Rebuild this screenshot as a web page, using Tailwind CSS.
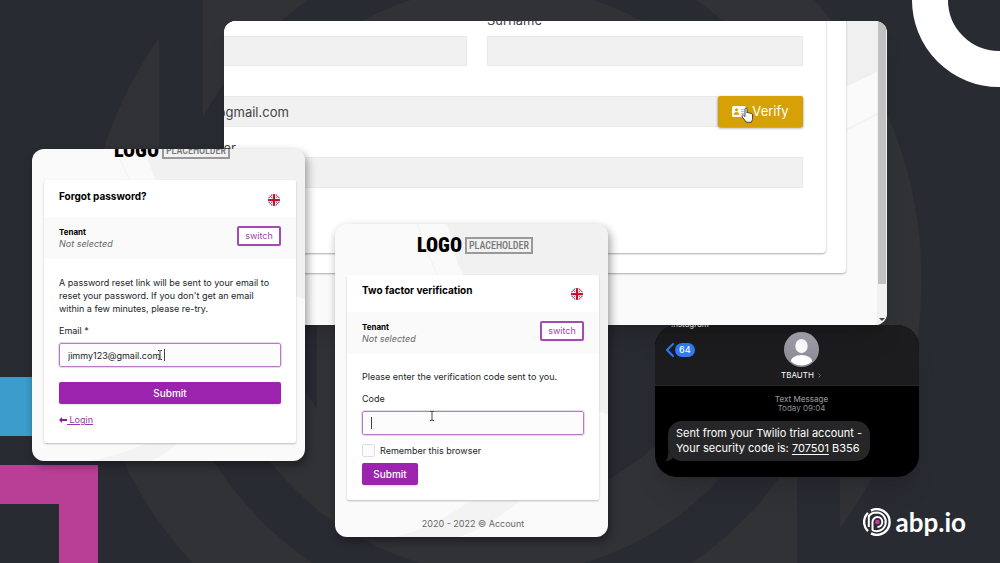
<!doctype html>
<html lang="en">
  <head>
    <meta charset="utf-8">
    <meta name="viewport" content="width=device-width, initial-scale=1.0">
    <title>Two factor verification - abp.io</title>
    <script src="https://cdn.jsdelivr.net/npm/@tailwindcss/browser@4"></script>
  </head>

  <body class="relative min-h-screen overflow-hidden bg-[#292b33] font-['Inter','Open_Sans',sans-serif] text-[#212529]">
    <!-- backdrop -->
    <svg class="absolute inset-0 h-full w-full" viewBox="0 0 1000 563" preserveAspectRatio="xMidYMid slice" aria-hidden="true">
      <g fill="none" stroke="#303236">
        <circle cx="502" cy="280" r="380" stroke-width="79" />
        <circle cx="502" cy="280" r="260" stroke-width="69" />
      </g>
      <path d="M159 0h44v424h-44zM797 250h43v313h-43z" fill="#292b33" />
      <path d="M317 300h30v232l-30-22z" fill="#303236" />
      <circle cx="999" cy="0" r="69" fill="none" stroke="#fff" stroke-width="36" />
      <path d="M0 377h60v59H0z" fill="#3c9dcc" />
      <path d="M0 465h98v98H59v-59H0z" fill="#b93f96" />
    </svg>

    <svg class="hidden" aria-hidden="true">
      <symbol id="flag" viewBox="0 0 24 24">
        <path d="M0 0h24v24H0z" fill="#2b3a78" />
        <path d="M0 0l24 24M24 0L0 24" stroke="#fff" stroke-width="5" />
        <path d="M0 0l24 24M24 0L0 24" stroke="#c8102e" stroke-width="1.5" />
        <path d="M12 0v24M0 12h24" stroke="#fff" stroke-width="8" />
        <path d="M12 0v24M0 12h24" stroke="#c8102e" stroke-width="4.5" />
      </symbol>
      <symbol id="ibeam" viewBox="0 0 6 10">
        <path d="M1 .5h1.500L3 1l.5-.5H5M3 1v8M1 9.500h1.500L3 9l.5.5H5" fill="none" stroke="#444" stroke-width="1" />
      </symbol>
    </svg>

    <!-- message window -->
    <section class="absolute left-[655px] top-[325px] w-[264px] overflow-hidden rounded-[22px] bg-black text-white shadow-xl">
      <header class="relative h-[61px] border-b border-[#2a2a2c] bg-[#1c1c1e]">
        <p class="absolute -top-[7px] left-4 text-[8px] leading-3">Instagram</p>
        <a href="#" class="absolute left-[11px] top-[18px] flex items-center gap-px">
          <svg class="h-[14px] w-2" viewBox="0 0 8 14" fill="none" stroke="#2f7cf6" stroke-width="2" stroke-linecap="round" stroke-linejoin="round"><path d="M7 1L1 7l6 6" /></svg>
          <span class="rounded-full bg-[#2f7cf6] px-1 text-[9px] font-medium leading-[14px]">64</span>
        </a>
        <div class="ml-7 flex flex-col items-center pt-[7px]">
          <svg class="h-[35px] w-[35px]" viewBox="0 0 35 35" aria-hidden="true">
            <defs>
              <linearGradient id="grey" x2="0" y2="1"><stop stop-color="#a9a8b4" /><stop offset="1" stop-color="#85848f" /></linearGradient>
              <clipPath id="face"><circle cx="17.500" cy="17.500" r="16" /></clipPath>
            </defs>
            <circle cx="17.500" cy="17.500" r="17.500" fill="url(#grey)" />
            <g clip-path="url(#face)" fill="#fff">
              <ellipse cx="17.500" cy="14" rx="6.200" ry="7" />
              <ellipse cx="17.500" cy="30" rx="11" ry="7" />
            </g>
          </svg>
          <p class="flex items-center gap-1 text-[8px] leading-4">TBAUTH
            <svg class="h-[5px] w-[3px]" viewBox="0 0 3 5" fill="none" stroke="#666"><path d="M.5.5l2 2-2 2" /></svg>
          </p>
        </div>
      </header>
      <div class="pb-4 pl-[13px] pt-[9px]">
        <p class="ml-4 text-center text-[8px] leading-[9px] text-[#8e8e93]"><span class="font-medium">Text Message</span><br>Today 09:04</p>
        <div class="relative mt-2 w-fit rounded-[14px] bg-[#262628] px-2 py-[5px] text-[11px] leading-[15px]">
          <svg class="absolute -left-[3px] bottom-0 h-[10px] w-3" viewBox="0 0 12 10" fill="#262628"><path d="M3 0c0 5 0 8-3 10 4 0 6-1 8-3z" /></svg>
          <p class="relative">Sent from your Twilio trial account -<br>Your security code is: <a href="#" class="underline underline-offset-2">707501</a> B356</p>
        </div>
      </div>
    </section>

    <!-- profile window -->
    <section class="absolute left-[224px] top-[21px] flex h-[304px] w-[663px] overflow-hidden rounded-xl bg-[#fafafa] shadow-xl">
      <div class="relative min-w-0 flex-1 pr-[31px]">
        <svg class="absolute right-0 top-0 h-[125px] w-[31px]" viewBox="0 0 31 125" aria-hidden="true">
          <path d="M0 0h31v51L0 66z" fill="#f0f0f0" />
          <path d="M0 109l31-16" stroke="#f3f3f3" stroke-width="2" />
        </svg>
        <div class="relative rounded-br-sm bg-white pb-5 pr-5 shadow-[0_1px_2px_#aaa]">
          <form class="rounded-br-sm bg-white pb-[65px] pr-[23px] text-[13px] text-[#444] shadow-[0_1px_2px_#aaa]">
            <div class="-mt-[9px] grid grid-cols-[243fr_316fr] gap-x-5">
              <div class="flex items-end"><input aria-label="Name" readonly class="h-[30px] w-full border border-l-0 border-[#e9e9e9] bg-[#f1f1f1]"></div>
              <div class="flex flex-col gap-2">
                <label for="surname" class="leading-4">Surname</label>
                <input id="surname" readonly class="h-[30px] w-full border border-[#e9e9e9] bg-[#f1f1f1] px-2">
              </div>
            </div>
            <div class="mt-[30px] flex">
              <input aria-label="Email" readonly value="@gmail.com" class="-ml-3 h-[31px] min-w-0 flex-1 border border-[#e9e9e9] bg-[#f1f1f1]">
              <button type="button" class="relative flex h-[31px] w-[85px] items-center justify-center gap-[6px] rounded-xs bg-[#d6a106] text-white shadow-sm shadow-black/40">
                <svg class="h-[11px] w-[14px]" viewBox="0 0 14 11" aria-hidden="true">
                  <rect width="14" height="11" rx="1.500" fill="#fff" />
                  <circle cx="4.500" cy="3.800" r="1.500" fill="#d6a106" />
                  <path d="M2 8.500c0-3 5-3 5 0zM9 3.500h3.500M9 5.500h3.500M9 7.500h3.500" fill="#d6a106" stroke="#d6a106" stroke-width=".7" />
                </svg>
                Verify
                <svg class="absolute left-[23px] top-[11px] h-4 w-3" viewBox="0 0 12 16" aria-hidden="true">
                  <path d="M4 9.500V2.200C4 .4 6 .4 6 2.200V6c.2-1 1.800-1 2 .3.500-.8 1.700-.5 1.800.6.600-.6 1.700-.2 1.700.8v3.500c0 2-.8 2.500-1 4H5c-.5-1.500-2-3-3-4.200C0 8.500 1.500 7 2.500 8.200z" fill="#fff" stroke="#222" stroke-width=".8" />
                </svg>
              </button>
            </div>
            <label for="phone" class="mb-px mt-[13px] flex w-3 justify-end whitespace-nowrap leading-4">Phone number</label>
            <input id="phone" readonly class="block h-[31px] w-full border border-l-0 border-[#e9e9e9] bg-[#f1f1f1]">
          </form>
        </div>
      </div>
      <!-- scrollbar -->
      <div class="flex w-[10px] flex-col bg-[#f1f1f1]">
        <div class="mx-px h-[263px] bg-[#c1c1c1]"></div>
        <svg class="mt-auto mb-1 ml-[2px] h-[3px] w-[6px]" viewBox="0 0 6 3"><path d="M0 0h6L3 3z" fill="#444" /></svg>
      </div>
    </section>

    <!-- forgot password window -->
    <section class="absolute left-8 top-[149px] w-[273px] overflow-hidden rounded-xl bg-[#fafafa] pb-[18px] pl-3 pr-[9px] text-[9px] shadow-[2px_4px_10px_#00000066]">
      <svg class="absolute left-0 top-0 h-full w-full" viewBox="0 0 273 312" preserveAspectRatio="none" aria-hidden="true">
        <path d="M112 0h161v150q-80-20-150-120z" fill="#f1f1f1" />
        <path d="M88 10l10 22" stroke="#f1f1f1" />
        <path d="M60 312q40-10 60-20h30q-20 15-30 20z" fill="#f3f3f3" />
      </svg>
      <div class="relative -mt-5 mb-[9px] flex h-[42px] items-center justify-center gap-[3px] pl-1">
        <strong class="font-['Liberation_Sans_Narrow','Roboto_Condensed','Roboto',sans-serif] text-[20px] font-black leading-5 text-black">LOGO</strong>
        <span class="border-2 border-[#999] px-[2px] font-['Liberation_Sans_Narrow','Roboto_Condensed','Roboto',sans-serif] text-[10px] font-medium leading-[13px] text-[#777]">PLACEHOLDER</span>
      </div>
      <div class="relative rounded-xs bg-white shadow-[0_1px_2px_#bbb]">
        <div class="flex h-[37px] items-start justify-between px-4 pl-[15px] pt-2">
          <h1 class="text-[10px] font-bold leading-4 text-black">Forgot password?</h1>
          <span class="flex h-6 items-center"><svg class="h-3 w-3 rounded-full"><use href="#flag" /></svg></span>
        </div>
        <div class="flex items-start justify-between bg-[#fafafa] px-[15px] py-[9px]">
          <p class="text-[8px] leading-3"><strong class="text-black">Tenant</strong><br><i class="text-[9px] text-[#666]">Not selected</i></p>
          <button type="button" class="h-5 w-11 rounded-xs border-2 border-[#a44bb3] bg-white leading-4 text-[#9b45aa] shadow-xs">switch</button>
        </div>
        <form class="px-[15px] pb-[15px] pt-[17px]">
          <p class="leading-[13px]">A password reset link will be sent to your email to reset your password. If you don't get an email within a few minutes, please re-try.</p>
          <label for="email" class="mb-1 mt-2 block leading-4">Email *</label>
          <div class="relative">
            <input id="email" value="jimmy123@gmail.com" class="block h-6 w-full rounded-xs border border-[#b77bc2] bg-[#fcfcfc] px-2 outline-1 outline-[#ead7ee]">
            <svg class="absolute left-[98px] top-[7px] h-[10px] w-[6px]"><use href="#ibeam" /></svg>
            <span class="absolute left-[105px] top-[6px] h-3 w-px bg-[#444]"></span>
          </div>
          <button type="button" class="mt-[15px] block h-[22px] w-full rounded-xs bg-[#9c23ad] text-[10px] font-medium text-white shadow-sm">Submit</button>
          <a href="#" class="mt-2 flex w-fit items-center leading-4 text-[#9b35ab]">
            <svg class="h-[6px] w-2" viewBox="0 0 8 6" fill="#8d1e9e"><path d="M3 0v2h5v2H3v2L0 3z" /></svg>
            <span class="whitespace-pre underline"> Login</span>
          </a>
        </form>
      </div>
    </section>

    <!-- two factor window -->
    <section class="absolute left-[335px] top-[224px] w-[273px] overflow-hidden rounded-xl bg-[#fafafa] pb-[5px] pl-3 pr-[9px] text-[9px] shadow-[2px_4px_10px_#00000066]">
      <svg class="absolute left-0 top-0 h-full w-full" viewBox="0 0 273 312" preserveAspectRatio="none" aria-hidden="true">
        <path d="M112 0h161v190q-80-20-150-150z" fill="#f1f1f1" />
        <path d="M82 0q10 30 25 60" stroke="#f1f1f1" fill="none" />
        <path d="M60 312q40-10 75-36h50q-30 25-60 36z" fill="#f3f3f3" />
      </svg>
      <div class="relative mb-[9px] flex h-[42px] items-center justify-center gap-[3px] pl-1">
        <strong class="font-['Liberation_Sans_Narrow','Roboto_Condensed','Roboto',sans-serif] text-[20px] font-black leading-5 text-black">LOGO</strong>
        <span class="border-2 border-[#999] px-[2px] font-['Liberation_Sans_Narrow','Roboto_Condensed','Roboto',sans-serif] text-[10px] font-medium leading-[13px] text-[#777]">PLACEHOLDER</span>
      </div>
      <div class="relative rounded-xs bg-white shadow-[0_1px_2px_#bbb]">
        <div class="flex h-[37px] items-start justify-between px-4 pl-[15px] pt-[7px]">
          <h1 class="text-[10px] font-bold leading-4 text-black">Two factor verification</h1>
          <span class="flex h-6 items-center"><svg class="h-3 w-3 rounded-full"><use href="#flag" /></svg></span>
        </div>
        <div class="flex items-start justify-between bg-[#fafafa] px-[15px] py-[9px]">
          <p class="text-[8px] leading-3"><strong class="text-black">Tenant</strong><br><i class="text-[9px] text-[#666]">Not selected</i></p>
          <button type="button" class="h-5 w-11 rounded-xs border-2 border-[#a44bb3] bg-white leading-4 text-[#9b45aa] shadow-xs">switch</button>
        </div>
        <form class="px-[15px] pb-[15px] pt-4">
          <p class="leading-[13px]">Please enter the verification code sent to you.</p>
          <label for="code" class="mb-1 mt-2 block leading-4">Code</label>
          <div class="relative">
            <input id="code" class="block h-6 w-full rounded-xs border border-[#b77bc2] bg-[#fcfcfc] px-2 outline-1 outline-[#ead7ee]">
            <svg class="absolute left-[67px] top-0 h-[10px] w-[6px]"><use href="#ibeam" /></svg>
            <span class="absolute left-[9px] top-[6px] h-3 w-px bg-[#444]"></span>
          </div>
          <div class="mt-[9px] flex h-[13px] items-center gap-[5px]">
            <input id="remember" type="checkbox" class="h-[13px] w-[13px] appearance-none rounded-xs border border-[#ddd] bg-[#fcfcfc]">
            <label for="remember">Remember this browser</label>
          </div>
          <button type="button" class="mt-[6px] block h-[22px] w-14 rounded-xs bg-[#9c23ad] text-[10px] font-medium text-white shadow-sm">Submit</button>
        </form>
      </div>
      <footer class="relative mt-4 text-center leading-4 text-[#666]">2020 - 2022 © Account</footer>
    </section>

    <!-- brand -->
    <a href="#" class="absolute bottom-[25px] right-[34px] flex items-center gap-[5px] text-white">
      <svg class="h-7 w-7" viewBox="0 0 28 28" fill="none" stroke="#fff" aria-hidden="true">
        <path d="M8 2.600A12.800 12.800 0 1 1 8 25.400M5 4.800A12.800 12.800 0 0 0 5 23.200" stroke-width="2.400" />
        <path d="M5.800 19V7M5.800 8.500Q8 4.600 14 4.600A9.300 9.300 0 1 1 9 22" stroke-width="2" />
        <path d="M9.500 22V14a4.900 4.900 0 1 1 4.900 4.900" stroke-width="2" />
        <circle cx="14.400" cy="14" r="2.300" fill="#c43c9c" stroke="none" />
      </svg>
      <span class="font-['Lato',sans-serif] text-[26px] font-bold leading-8">abp.io</span>
    </a>
  </body>
</html>
